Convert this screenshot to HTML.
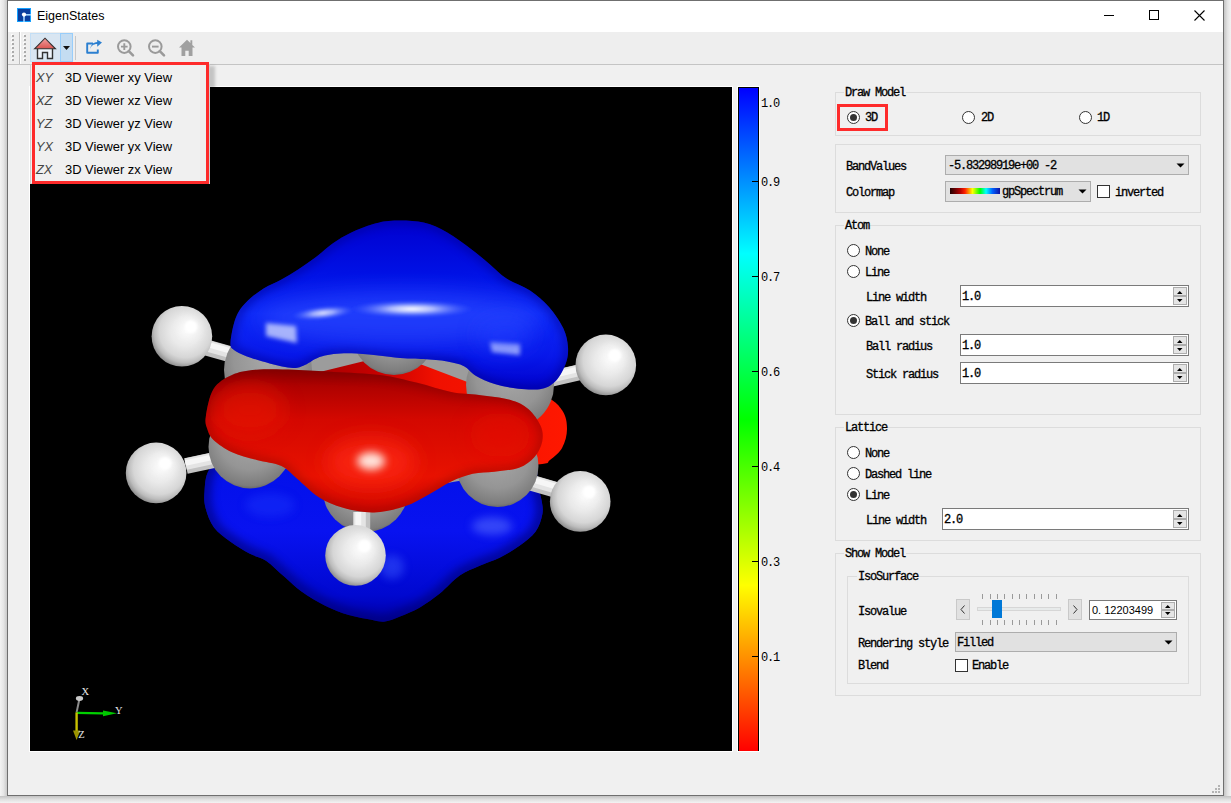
<!DOCTYPE html>
<html><head><meta charset="utf-8">
<style>
*{margin:0;padding:0;box-sizing:border-box}
html,body{width:1231px;height:803px;overflow:hidden;background:#f2f2f2;position:relative;font-family:"Liberation Sans",sans-serif}
.a{position:absolute}
#shadowL{left:0;top:0;width:7px;height:803px;background:linear-gradient(to right,#f3f3f3,#e6e6e6 50%,#c9c9c9)}
#shadowR{left:1224px;top:0;width:7px;height:803px;background:linear-gradient(to left,#f3f3f3,#e3e3e3 50%,#c4c4c4)}
#shadowB{left:0;top:796px;width:1231px;height:7px;background:linear-gradient(to top,#f3f3f3,#e0e0e0 50%,#c2c2c2)}
#win{left:7px;top:0;width:1217px;height:796px;border:1px solid #6f6f6f;background:#f0f0f0}
#title{left:8px;top:1px;width:1215px;height:31px;background:#fff}
#tb{left:8px;top:32px;width:1215px;height:32px;background:#eeeeee}
#tbline{left:8px;top:64px;width:1215px;height:1px;background:#c4c4c4}
.mono{font-family:"Liberation Mono",monospace;font-size:12px;letter-spacing:-1.2px;color:#000;white-space:pre;line-height:12px;-webkit-text-stroke:0.3px #000;margin-left:-1px}
.grp{border:1px solid #dcdcdc}
.gt{background:#f0f0f0;padding:0 1px}
.radio{width:13px;height:13px;border:1px solid #333;border-radius:50%;background:#fff}
.radio.on::after{content:"";position:absolute;left:2px;top:2px;width:7px;height:7px;border-radius:50%;background:#333}
.spin{background:#fff;border:1px solid #7a7a7a}
.sb{border:1px solid #adadad;background:#e5e5e5}
.combo{background:#e1e1e1;border:1px solid #adadad}
.chk{width:13px;height:13px;border:1px solid #333;background:#fff}
</style></head><body>
<div class="a" id="shadowL"></div><div class="a" id="shadowR"></div><div class="a" id="shadowB"></div>
<div class="a" id="win"></div>
<div class="a" id="title"></div>
<div class="a" id="tb"></div>
<div class="a" id="tbline"></div>

<!-- title bar -->
<svg class="a" style="left:17px;top:8px" width="14" height="14" viewBox="0 0 14 14">
<rect x="0" y="0" width="14" height="14" fill="#14a0ff"/>
<rect x="1" y="1" width="12" height="12" fill="#0a3f9e"/>
<rect x="7" y="6" width="7" height="1.6" fill="#9fd4ff"/>
<rect x="6.2" y="7" width="1.6" height="7" fill="#9fd4ff"/>
<circle cx="7" cy="6.6" r="2.1" fill="#fff"/>
</svg>
<div class="a" style="left:37px;top:8px;font-size:12.5px;line-height:16px;color:#000">EigenStates</div>
<div class="a" style="left:1104px;top:15px;width:10px;height:1px;background:#000"></div>
<div class="a" style="left:1149px;top:10px;width:10px;height:10px;border:1px solid #000"></div>
<svg class="a" style="left:1194px;top:10px" width="11" height="11" viewBox="0 0 11 11"><path d="M0.5 0.5L10.5 10.5M10.5 0.5L0.5 10.5" stroke="#000" stroke-width="1.1"/></svg>
<!-- toolbar -->
<div class="a" style="left:19px;top:32px;width:1px;height:32px;background:#bdbdbd"></div>
<div class="a" style="left:20px;top:32px;width:1px;height:32px;background:#fff"></div>
<div class="a" style="left:12px;top:35px;width:2px;height:2px;background:#ababab;box-shadow:-1px -1px 0 #fbfbfb"></div><div class="a" style="left:12px;top:39px;width:2px;height:2px;background:#ababab;box-shadow:-1px -1px 0 #fbfbfb"></div><div class="a" style="left:12px;top:43px;width:2px;height:2px;background:#ababab;box-shadow:-1px -1px 0 #fbfbfb"></div><div class="a" style="left:12px;top:47px;width:2px;height:2px;background:#ababab;box-shadow:-1px -1px 0 #fbfbfb"></div><div class="a" style="left:12px;top:51px;width:2px;height:2px;background:#ababab;box-shadow:-1px -1px 0 #fbfbfb"></div><div class="a" style="left:12px;top:55px;width:2px;height:2px;background:#ababab;box-shadow:-1px -1px 0 #fbfbfb"></div><div class="a" style="left:12px;top:59px;width:2px;height:2px;background:#ababab;box-shadow:-1px -1px 0 #fbfbfb"></div><div class="a" style="left:24px;top:35px;width:2px;height:2px;background:#ababab;box-shadow:-1px -1px 0 #fbfbfb"></div><div class="a" style="left:24px;top:39px;width:2px;height:2px;background:#ababab;box-shadow:-1px -1px 0 #fbfbfb"></div><div class="a" style="left:24px;top:43px;width:2px;height:2px;background:#ababab;box-shadow:-1px -1px 0 #fbfbfb"></div><div class="a" style="left:24px;top:47px;width:2px;height:2px;background:#ababab;box-shadow:-1px -1px 0 #fbfbfb"></div><div class="a" style="left:24px;top:51px;width:2px;height:2px;background:#ababab;box-shadow:-1px -1px 0 #fbfbfb"></div><div class="a" style="left:24px;top:55px;width:2px;height:2px;background:#ababab;box-shadow:-1px -1px 0 #fbfbfb"></div><div class="a" style="left:24px;top:59px;width:2px;height:2px;background:#ababab;box-shadow:-1px -1px 0 #fbfbfb"></div>

<div class="a" style="left:30px;top:33px;width:43px;height:29px;background:#d9e6f2;border:1px solid #c3def5"></div>
<div class="a" style="left:60px;top:33px;width:13px;height:29px;background:#c4dcf1;border:1px solid #98cdfa"></div>
<svg class="a" style="left:33px;top:36px" width="26" height="24" viewBox="0 0 26 24">
<defs><linearGradient id="roof" x1="0" y1="0" x2="0" y2="1"><stop offset="0" stop-color="#f2a0a0"/><stop offset="1" stop-color="#d9534f"/></linearGradient></defs>
<path d="M4.5 12.5V22.5H9.5V16.5H14.5V22.5H19.5V12.5" fill="#eef4fa" stroke="#333" stroke-width="1.4"/>
<path d="M1.5 12.8L12 2.2L22.5 12.8Z" fill="url(#roof)" stroke="#333" stroke-width="1.1" stroke-linejoin="miter"/>
</svg>
<svg class="a" style="left:62px;top:45px" width="9" height="6" viewBox="0 0 9 6"><path d="M1 1H8L4.5 5Z" fill="#111"/></svg>
<div class="a" style="left:75px;top:36px;width:1px;height:24px;background:#c8c8c8"></div>
<svg class="a" style="left:85px;top:39px" width="18" height="16" viewBox="0 0 18 16">
<path d="M8 4.5H2.2V13.8H12.8V10.5" fill="none" stroke="#2b7fd0" stroke-width="1.9" stroke-linejoin="round"/>
<path d="M5 11C5.5 7 8.5 5 12.2 5V7.8L17 3.6L12.2 0.8V3.1C8 3.2 5.5 6.5 5 11Z" fill="#2b7fd0"/>
</svg>
<svg class="a" style="left:114px;top:37px" width="22" height="22" viewBox="0 0 22 22">
<circle cx="10.3" cy="9.6" r="6.3" fill="none" stroke="#9a9a9a" stroke-width="2"/>
<path d="M14.8 14.2L19 18.4" stroke="#9a9a9a" stroke-width="2.6" stroke-linecap="round"/>
<path d="M7 9.6H13.6M10.3 6.3V12.9" stroke="#9a9a9a" stroke-width="1.9"/>
</svg>
<svg class="a" style="left:145px;top:37px" width="22" height="22" viewBox="0 0 22 22">
<circle cx="10.3" cy="9.6" r="6.3" fill="none" stroke="#9a9a9a" stroke-width="2"/>
<path d="M14.8 14.2L19 18.4" stroke="#9a9a9a" stroke-width="2.6" stroke-linecap="round"/>
<path d="M7 9.6H13.6" stroke="#9a9a9a" stroke-width="1.9"/>
</svg>
<svg class="a" style="left:178px;top:39px" width="18" height="18" viewBox="0 0 18 18">
<path d="M9 0.8L1 8.5H3.5V17H7.3V11.8H10.7V17H14.5V8.5H17L14.3 5.9V1.2H12.4V4.1Z" fill="#a0a0a0"/>
</svg>

<!-- view -->
<div class="a" style="left:29px;top:86px;width:704px;height:666px;background:#fff"></div>
<div class="a" id="view" style="left:30px;top:87px;width:702px;height:664px;background:#000"></div>
<!-- mol --><svg class="a" style="left:30px;top:87px" width="702" height="664" viewBox="30 87 702 664"><defs>
<radialGradient id="gH" cx="0.56" cy="0.42" r="0.6"><stop offset="0" stop-color="#f6f6f6"/><stop offset="0.4" stop-color="#eaeaea"/><stop offset="0.72" stop-color="#d6d6d6"/><stop offset="0.86" stop-color="#bcbcbc"/><stop offset="1" stop-color="#8c8c8c"/></radialGradient>
<radialGradient id="gC" cx="0.5" cy="0.38" r="0.65"><stop offset="0" stop-color="#a8a8a8"/><stop offset="0.6" stop-color="#959595"/><stop offset="0.9" stop-color="#7c7c7c"/><stop offset="1" stop-color="#5a5a5a"/></radialGradient>
<linearGradient id="stk" x1="0" y1="0" x2="0" y2="1"><stop offset="0" stop-color="#e8e8e8"/><stop offset="0.4" stop-color="#f4f4f4"/><stop offset="1" stop-color="#b8b8b8"/></linearGradient>
<linearGradient id="gB1" gradientUnits="userSpaceOnUse" x1="0" y1="220" x2="0" y2="390"><stop offset="0" stop-color="#0000d0"/><stop offset="0.3" stop-color="#0010e4"/><stop offset="0.55" stop-color="#0e2af8"/><stop offset="0.8" stop-color="#0818ea"/><stop offset="1" stop-color="#0000cc"/></linearGradient>
<linearGradient id="gB2" gradientUnits="userSpaceOnUse" x1="0" y1="440" x2="0" y2="622"><stop offset="0" stop-color="#0010e8"/><stop offset="0.5" stop-color="#0812f0"/><stop offset="0.85" stop-color="#0008d0"/><stop offset="1" stop-color="#0000a8"/></linearGradient>
<linearGradient id="gR1" gradientUnits="userSpaceOnUse" x1="0" y1="370" x2="0" y2="512"><stop offset="0" stop-color="#8c0000"/><stop offset="0.12" stop-color="#b00200"/><stop offset="0.35" stop-color="#d40800"/><stop offset="0.75" stop-color="#e81200"/><stop offset="1" stop-color="#d00800"/></linearGradient>
<linearGradient id="gR0" gradientUnits="userSpaceOnUse" x1="300" y1="0" x2="570" y2="0"><stop offset="0" stop-color="#a00000"/><stop offset="0.3" stop-color="#c80000"/><stop offset="0.5" stop-color="#f01000"/><stop offset="1" stop-color="#ff1800"/></linearGradient>
<radialGradient id="hl" cx="0.5" cy="0.5" r="0.5"><stop offset="0" stop-color="#ffffff" stop-opacity="1"/><stop offset="0.35" stop-color="#c8d2ff" stop-opacity="0.85"/><stop offset="1" stop-color="#4060ff" stop-opacity="0"/></radialGradient>
<clipPath id="cB1"><path d="M230.5 342.5C230.8 337.2 233.1 324.7 235.7 318.0C238.3 311.3 241.3 307.3 246.0 302.4C250.7 297.5 257.8 292.3 263.6 288.5C269.4 284.7 275.2 282.9 281.0 279.7C286.8 276.5 292.7 273.1 298.5 269.3C304.3 265.5 310.2 261.4 316.0 257.0C321.8 252.6 327.5 247.1 333.3 243.0C339.1 238.9 344.1 235.9 350.8 232.7C357.5 229.5 366.1 226.0 373.4 224.0C380.7 222.0 386.0 220.8 394.4 220.5C402.8 220.2 414.9 220.5 423.7 222.5C432.5 224.5 439.4 228.1 447.3 232.5C455.2 236.9 463.9 243.7 471.0 249.0C478.1 254.3 484.1 259.5 490.0 264.4C495.9 269.3 499.8 274.2 506.5 278.6C513.2 283.0 522.9 285.8 530.0 290.5C537.1 295.2 543.5 300.7 549.0 307.0C554.5 313.3 560.1 321.6 563.3 328.3C566.5 335.0 567.6 341.4 568.0 347.3C568.4 353.2 567.7 358.3 565.7 363.8C563.7 369.3 560.2 376.2 556.2 380.4C552.2 384.5 548.3 387.3 542.0 388.7C535.7 390.1 526.2 389.5 518.3 388.7C510.4 387.9 501.8 386.2 494.7 384.0C487.6 381.8 480.8 378.7 475.7 375.7C470.6 372.7 468.7 368.6 464.0 366.2C459.3 363.8 454.0 362.7 447.3 361.5C440.6 360.3 431.6 359.7 423.7 359.1C415.8 358.5 412.0 359.0 400.0 358.0C388.0 357.0 364.6 353.6 351.6 353.3C338.7 353.0 330.1 354.2 322.3 356.2C314.5 358.1 309.7 363.0 304.8 365.0C299.9 367.0 298.9 368.2 293.0 368.0C287.1 367.8 277.5 365.5 269.7 363.5C261.9 361.5 252.2 358.4 246.3 356.2C240.4 353.9 236.6 352.3 234.0 350.0C231.4 347.7 230.2 347.8 230.5 342.5Z"/></clipPath>
<clipPath id="cR1"><path d="M205.8 416.7C206.8 410.0 209.1 395.9 213.5 389.0C217.9 382.1 224.8 378.2 232.0 375.0C239.2 371.8 246.4 370.7 256.7 369.8C267.0 368.9 280.9 369.4 293.8 369.8C306.7 370.2 319.5 371.1 333.9 372.0C348.3 372.9 366.3 373.2 380.2 375.0C394.1 376.8 405.4 380.0 417.2 382.8C429.0 385.6 440.9 390.0 451.2 392.0C461.5 394.0 469.2 393.7 479.0 395.0C488.8 396.3 501.6 397.5 509.8 399.8C518.0 402.1 523.1 404.6 528.3 409.0C533.4 413.4 538.4 420.6 540.7 426.0C543.0 431.4 543.2 436.2 542.2 441.4C541.2 446.5 538.4 452.5 534.5 456.9C530.6 461.3 525.7 465.2 519.0 467.7C512.3 470.2 502.1 470.7 494.4 471.7C486.7 472.7 480.0 472.2 472.8 473.8C465.6 475.4 458.4 478.1 451.2 481.5C444.0 484.9 437.3 489.8 429.6 493.9C421.9 498.0 414.2 503.1 404.9 506.2C395.6 509.3 384.3 512.1 374.0 512.4C363.7 512.7 352.4 510.4 343.1 507.8C333.9 505.2 326.2 501.9 318.5 497.0C310.8 492.1 303.1 483.7 296.9 478.5C290.7 473.3 288.1 469.1 281.4 466.0C274.7 462.9 264.9 462.3 256.7 460.0C248.5 457.7 239.2 455.6 232.0 452.2C224.8 448.8 217.6 443.8 213.5 439.9C209.4 436.0 208.6 432.9 207.3 429.0C206.0 425.1 204.8 423.4 205.8 416.7Z"/></clipPath>
<clipPath id="cB2"><path d="M209.0 470.0C204.8 477.3 205.1 485.6 204.5 492.0C203.9 498.4 204.1 502.7 205.7 508.6C207.3 514.5 209.9 522.1 214.0 527.6C218.1 533.1 224.6 537.5 230.5 541.8C236.4 546.1 243.5 550.5 249.4 553.6C255.3 556.8 260.1 556.8 266.0 560.7C271.9 564.7 279.1 572.2 285.0 577.3C290.9 582.4 294.8 586.8 301.5 591.5C308.2 596.2 317.3 601.8 325.2 605.7C333.1 609.6 340.9 612.7 348.8 615.1C356.7 617.5 366.5 618.8 372.5 619.9C378.5 621.0 380.4 622.1 385.0 621.5C389.6 620.9 394.2 618.8 400.0 616.5C405.8 614.2 413.3 611.3 419.9 607.5C426.5 603.7 433.2 598.9 439.8 593.6C446.4 588.3 453.1 580.2 459.7 575.6C466.3 571.0 473.0 568.7 479.7 565.7C486.4 562.7 493.0 561.0 499.6 557.7C506.2 554.4 513.5 550.0 519.5 545.7C525.5 541.4 531.7 537.1 535.5 531.8C539.3 526.5 541.4 519.2 542.4 513.9C543.4 508.6 542.3 504.7 541.5 499.9C540.7 495.1 539.4 492.5 537.5 485.0C535.6 477.5 541.2 462.5 530.0 455.0C518.8 447.5 491.7 443.3 470.0 440.0C448.3 436.7 428.3 435.0 400.0 435.0C371.7 435.0 328.3 437.8 300.0 440.0C271.7 442.2 245.2 443.0 230.0 448.0C214.8 453.0 213.2 462.7 209.0 470.0Z"/></clipPath>
<filter id="bl1" x="-50%" y="-50%" width="200%" height="200%"><feGaussianBlur stdDeviation="1.3"/></filter>
<filter id="bl2" x="-50%" y="-50%" width="200%" height="200%"><feGaussianBlur stdDeviation="2"/></filter>
<filter id="bl4" x="-50%" y="-50%" width="200%" height="200%"><feGaussianBlur stdDeviation="4"/></filter>
<filter id="bl10" x="-50%" y="-50%" width="200%" height="200%"><feGaussianBlur stdDeviation="10"/></filter>
</defs>
<path d="M300.0 372.0C308.3 357.0 330.0 354.0 350.0 350.0C370.0 346.0 398.3 346.0 420.0 348.0C441.7 350.0 459.4 354.2 480.0 362.0C500.6 369.8 530.1 386.9 543.8 395.0C557.5 403.1 558.4 404.9 562.3 410.6C566.2 416.3 567.0 422.8 567.0 429.0C567.0 435.2 565.1 442.4 562.3 447.6C559.5 452.8 554.1 457.2 550.0 460.0C545.9 462.8 552.6 462.9 537.6 464.6C522.6 466.3 489.6 469.9 460.0 470.0C430.4 470.1 386.7 470.0 360.0 465.0C333.3 460.0 310.0 455.5 300.0 440.0C290.0 424.5 291.7 387.0 300.0 372.0Z" fill="url(#gR0)"/>
<path d="M209.0 470.0C204.8 477.3 205.1 485.6 204.5 492.0C203.9 498.4 204.1 502.7 205.7 508.6C207.3 514.5 209.9 522.1 214.0 527.6C218.1 533.1 224.6 537.5 230.5 541.8C236.4 546.1 243.5 550.5 249.4 553.6C255.3 556.8 260.1 556.8 266.0 560.7C271.9 564.7 279.1 572.2 285.0 577.3C290.9 582.4 294.8 586.8 301.5 591.5C308.2 596.2 317.3 601.8 325.2 605.7C333.1 609.6 340.9 612.7 348.8 615.1C356.7 617.5 366.5 618.8 372.5 619.9C378.5 621.0 380.4 622.1 385.0 621.5C389.6 620.9 394.2 618.8 400.0 616.5C405.8 614.2 413.3 611.3 419.9 607.5C426.5 603.7 433.2 598.9 439.8 593.6C446.4 588.3 453.1 580.2 459.7 575.6C466.3 571.0 473.0 568.7 479.7 565.7C486.4 562.7 493.0 561.0 499.6 557.7C506.2 554.4 513.5 550.0 519.5 545.7C525.5 541.4 531.7 537.1 535.5 531.8C539.3 526.5 541.4 519.2 542.4 513.9C543.4 508.6 542.3 504.7 541.5 499.9C540.7 495.1 539.4 492.5 537.5 485.0C535.6 477.5 541.2 462.5 530.0 455.0C518.8 447.5 491.7 443.3 470.0 440.0C448.3 436.7 428.3 435.0 400.0 435.0C371.7 435.0 328.3 437.8 300.0 440.0C271.7 442.2 245.2 443.0 230.0 448.0C214.8 453.0 213.2 462.7 209.0 470.0Z" fill="url(#gB2)"/>
<g clip-path="url(#cB2)"><path d="M209.0 470.0C204.8 477.3 205.1 485.6 204.5 492.0C203.9 498.4 204.1 502.7 205.7 508.6C207.3 514.5 209.9 522.1 214.0 527.6C218.1 533.1 224.6 537.5 230.5 541.8C236.4 546.1 243.5 550.5 249.4 553.6C255.3 556.8 260.1 556.8 266.0 560.7C271.9 564.7 279.1 572.2 285.0 577.3C290.9 582.4 294.8 586.8 301.5 591.5C308.2 596.2 317.3 601.8 325.2 605.7C333.1 609.6 340.9 612.7 348.8 615.1C356.7 617.5 366.5 618.8 372.5 619.9C378.5 621.0 380.4 622.1 385.0 621.5C389.6 620.9 394.2 618.8 400.0 616.5C405.8 614.2 413.3 611.3 419.9 607.5C426.5 603.7 433.2 598.9 439.8 593.6C446.4 588.3 453.1 580.2 459.7 575.6C466.3 571.0 473.0 568.7 479.7 565.7C486.4 562.7 493.0 561.0 499.6 557.7C506.2 554.4 513.5 550.0 519.5 545.7C525.5 541.4 531.7 537.1 535.5 531.8C539.3 526.5 541.4 519.2 542.4 513.9C543.4 508.6 542.3 504.7 541.5 499.9C540.7 495.1 539.4 492.5 537.5 485.0C535.6 477.5 541.2 462.5 530.0 455.0C518.8 447.5 491.7 443.3 470.0 440.0C448.3 436.7 428.3 435.0 400.0 435.0C371.7 435.0 328.3 437.8 300.0 440.0C271.7 442.2 245.2 443.0 230.0 448.0C214.8 453.0 213.2 462.7 209.0 470.0Z" fill="none" stroke="#000070" stroke-width="14" opacity="0.6" filter="url(#bl4)"/>
<ellipse cx="492" cy="526" rx="20" ry="9" fill="#6078ff" opacity="0.5" filter="url(#bl4)"/><ellipse cx="392" cy="567" rx="12" ry="12" fill="#4060ff" opacity="0.45" filter="url(#bl4)"/><ellipse cx="270" cy="505" rx="25" ry="12" fill="#2040ff" opacity="0.35" filter="url(#bl4)"/></g>
<line x1="240.0" y1="357.0" x2="201.0" y2="346.0" stroke="#c2c2c2" stroke-width="16"/><line x1="240.5" y1="355.2" x2="201.5" y2="344.2" stroke="#e4e4e4" stroke-width="11.5"/><line x1="240.9" y1="353.9" x2="201.9" y2="342.9" stroke="#f6f6f6" stroke-width="5.6"/>
<line x1="548.0" y1="379.5" x2="585.0" y2="371.0" stroke="#c2c2c2" stroke-width="16"/><line x1="547.6" y1="377.6" x2="584.6" y2="369.1" stroke="#e4e4e4" stroke-width="11.5"/><line x1="547.3" y1="376.4" x2="584.3" y2="367.9" stroke="#f6f6f6" stroke-width="5.6"/>
<line x1="226.0" y1="457.5" x2="186.0" y2="466.0" stroke="#c2c2c2" stroke-width="16"/><line x1="225.6" y1="455.6" x2="185.6" y2="464.1" stroke="#e4e4e4" stroke-width="11.5"/><line x1="225.3" y1="454.4" x2="185.3" y2="462.9" stroke="#f6f6f6" stroke-width="5.6"/>
<line x1="515.0" y1="478.0" x2="555.0" y2="489.6" stroke="#c2c2c2" stroke-width="16"/><line x1="515.5" y1="476.2" x2="555.5" y2="487.8" stroke="#e4e4e4" stroke-width="11.5"/><line x1="515.9" y1="474.9" x2="555.9" y2="486.5" stroke="#f6f6f6" stroke-width="5.6"/>
<line x1="497.5" y1="466.0" x2="365.5" y2="489.0" stroke="#9c9c9c" stroke-width="16"/>
<line x1="365.5" y1="489.0" x2="250.0" y2="447.0" stroke="#9c9c9c" stroke-width="16"/>
<circle cx="497.5" cy="466.0" r="41.0" fill="url(#gC)"/>
<circle cx="365.5" cy="489.0" r="43.0" fill="url(#gC)"/>
<circle cx="250.0" cy="447.0" r="41.5" fill="url(#gC)"/>
<line x1="268.0" y1="376.0" x2="394.0" y2="345.0" stroke="#9c9c9c" stroke-width="17"/>
<line x1="394.0" y1="345.0" x2="510.0" y2="389.0" stroke="#9c9c9c" stroke-width="17"/>
<line x1="510.0" y1="385.0" x2="497.5" y2="466.0" stroke="#9c9c9c" stroke-width="16"/>
<line x1="268.0" y1="370.0" x2="250.0" y2="447.0" stroke="#9c9c9c" stroke-width="16"/>
<circle cx="394.0" cy="333.0" r="42.0" fill="url(#gC)"/>
<circle cx="510.0" cy="385.0" r="44.0" fill="url(#gC)"/>
<circle cx="268.0" cy="370.0" r="44.0" fill="url(#gC)"/>
<circle cx="181.9" cy="336.3" r="30.3" fill="url(#gH)"/><circle cx="189.9" cy="327.3" r="11" fill="#ffffff" opacity="0.5" filter="url(#bl4)"/><circle cx="190.9" cy="326.8" r="6.5" fill="#ffffff" opacity="1" filter="url(#bl1)"/>
<circle cx="605.8" cy="364.9" r="30.3" fill="url(#gH)"/><circle cx="613.8" cy="355.9" r="11" fill="#ffffff" opacity="0.5" filter="url(#bl4)"/><circle cx="614.8" cy="355.4" r="6.5" fill="#ffffff" opacity="1" filter="url(#bl1)"/>
<circle cx="156.1" cy="472.9" r="30.3" fill="url(#gH)"/><circle cx="164.1" cy="463.9" r="11" fill="#ffffff" opacity="0.5" filter="url(#bl4)"/><circle cx="165.1" cy="463.4" r="6.5" fill="#ffffff" opacity="1" filter="url(#bl1)"/>
<circle cx="580.2" cy="501.4" r="30.3" fill="url(#gH)"/><circle cx="588.2" cy="492.4" r="11" fill="#ffffff" opacity="0.5" filter="url(#bl4)"/><circle cx="589.2" cy="491.9" r="6.5" fill="#ffffff" opacity="1" filter="url(#bl1)"/>
<path d="M230.5 342.5C230.8 337.2 233.1 324.7 235.7 318.0C238.3 311.3 241.3 307.3 246.0 302.4C250.7 297.5 257.8 292.3 263.6 288.5C269.4 284.7 275.2 282.9 281.0 279.7C286.8 276.5 292.7 273.1 298.5 269.3C304.3 265.5 310.2 261.4 316.0 257.0C321.8 252.6 327.5 247.1 333.3 243.0C339.1 238.9 344.1 235.9 350.8 232.7C357.5 229.5 366.1 226.0 373.4 224.0C380.7 222.0 386.0 220.8 394.4 220.5C402.8 220.2 414.9 220.5 423.7 222.5C432.5 224.5 439.4 228.1 447.3 232.5C455.2 236.9 463.9 243.7 471.0 249.0C478.1 254.3 484.1 259.5 490.0 264.4C495.9 269.3 499.8 274.2 506.5 278.6C513.2 283.0 522.9 285.8 530.0 290.5C537.1 295.2 543.5 300.7 549.0 307.0C554.5 313.3 560.1 321.6 563.3 328.3C566.5 335.0 567.6 341.4 568.0 347.3C568.4 353.2 567.7 358.3 565.7 363.8C563.7 369.3 560.2 376.2 556.2 380.4C552.2 384.5 548.3 387.3 542.0 388.7C535.7 390.1 526.2 389.5 518.3 388.7C510.4 387.9 501.8 386.2 494.7 384.0C487.6 381.8 480.8 378.7 475.7 375.7C470.6 372.7 468.7 368.6 464.0 366.2C459.3 363.8 454.0 362.7 447.3 361.5C440.6 360.3 431.6 359.7 423.7 359.1C415.8 358.5 412.0 359.0 400.0 358.0C388.0 357.0 364.6 353.6 351.6 353.3C338.7 353.0 330.1 354.2 322.3 356.2C314.5 358.1 309.7 363.0 304.8 365.0C299.9 367.0 298.9 368.2 293.0 368.0C287.1 367.8 277.5 365.5 269.7 363.5C261.9 361.5 252.2 358.4 246.3 356.2C240.4 353.9 236.6 352.3 234.0 350.0C231.4 347.7 230.2 347.8 230.5 342.5Z" fill="url(#gB1)"/>
<g clip-path="url(#cB1)">
<path d="M230.5 342.5C230.8 337.2 233.1 324.7 235.7 318.0C238.3 311.3 241.3 307.3 246.0 302.4C250.7 297.5 257.8 292.3 263.6 288.5C269.4 284.7 275.2 282.9 281.0 279.7C286.8 276.5 292.7 273.1 298.5 269.3C304.3 265.5 310.2 261.4 316.0 257.0C321.8 252.6 327.5 247.1 333.3 243.0C339.1 238.9 344.1 235.9 350.8 232.7C357.5 229.5 366.1 226.0 373.4 224.0C380.7 222.0 386.0 220.8 394.4 220.5C402.8 220.2 414.9 220.5 423.7 222.5C432.5 224.5 439.4 228.1 447.3 232.5C455.2 236.9 463.9 243.7 471.0 249.0C478.1 254.3 484.1 259.5 490.0 264.4C495.9 269.3 499.8 274.2 506.5 278.6C513.2 283.0 522.9 285.8 530.0 290.5C537.1 295.2 543.5 300.7 549.0 307.0C554.5 313.3 560.1 321.6 563.3 328.3C566.5 335.0 567.6 341.4 568.0 347.3C568.4 353.2 567.7 358.3 565.7 363.8C563.7 369.3 560.2 376.2 556.2 380.4C552.2 384.5 548.3 387.3 542.0 388.7C535.7 390.1 526.2 389.5 518.3 388.7C510.4 387.9 501.8 386.2 494.7 384.0C487.6 381.8 480.8 378.7 475.7 375.7C470.6 372.7 468.7 368.6 464.0 366.2C459.3 363.8 454.0 362.7 447.3 361.5C440.6 360.3 431.6 359.7 423.7 359.1C415.8 358.5 412.0 359.0 400.0 358.0C388.0 357.0 364.6 353.6 351.6 353.3C338.7 353.0 330.1 354.2 322.3 356.2C314.5 358.1 309.7 363.0 304.8 365.0C299.9 367.0 298.9 368.2 293.0 368.0C287.1 367.8 277.5 365.5 269.7 363.5C261.9 361.5 252.2 358.4 246.3 356.2C240.4 353.9 236.6 352.3 234.0 350.0C231.4 347.7 230.2 347.8 230.5 342.5Z" fill="none" stroke="#00008c" stroke-width="9" opacity="0.5" filter="url(#bl4)"/>
<ellipse cx="400" cy="318" rx="140" ry="26" fill="#3050ff" opacity="0.5" filter="url(#bl10)"/>
<ellipse cx="412" cy="309" rx="62" ry="9" fill="url(#hl)" filter="url(#bl1)"/>
<ellipse cx="323" cy="313" rx="32" ry="7" fill="url(#hl)" opacity="0.85" filter="url(#bl1)" transform="rotate(-6 323 313)"/>
<path d="M266 323L296 326L297 343L266 336Z" fill="#d8e0ff" opacity="0.75" filter="url(#bl2)"/>
<path d="M490 342L520 344L520 355L492 352Z" fill="#d8e0ff" opacity="0.8" filter="url(#bl2)"/>
<ellipse cx="505" cy="335" rx="30" ry="18" fill="#2040ff" opacity="0.45" filter="url(#bl10)"/>
</g>
<line x1="361.7" y1="512.0" x2="361.7" y2="532.0" stroke="#c2c2c2" stroke-width="17"/><line x1="359.7" y1="512.0" x2="359.7" y2="532.0" stroke="#e4e4e4" stroke-width="12.2"/><line x1="358.3" y1="512.0" x2="358.3" y2="532.0" stroke="#f6f6f6" stroke-width="5.9"/>
<path d="M205.8 416.7C206.8 410.0 209.1 395.9 213.5 389.0C217.9 382.1 224.8 378.2 232.0 375.0C239.2 371.8 246.4 370.7 256.7 369.8C267.0 368.9 280.9 369.4 293.8 369.8C306.7 370.2 319.5 371.1 333.9 372.0C348.3 372.9 366.3 373.2 380.2 375.0C394.1 376.8 405.4 380.0 417.2 382.8C429.0 385.6 440.9 390.0 451.2 392.0C461.5 394.0 469.2 393.7 479.0 395.0C488.8 396.3 501.6 397.5 509.8 399.8C518.0 402.1 523.1 404.6 528.3 409.0C533.4 413.4 538.4 420.6 540.7 426.0C543.0 431.4 543.2 436.2 542.2 441.4C541.2 446.5 538.4 452.5 534.5 456.9C530.6 461.3 525.7 465.2 519.0 467.7C512.3 470.2 502.1 470.7 494.4 471.7C486.7 472.7 480.0 472.2 472.8 473.8C465.6 475.4 458.4 478.1 451.2 481.5C444.0 484.9 437.3 489.8 429.6 493.9C421.9 498.0 414.2 503.1 404.9 506.2C395.6 509.3 384.3 512.1 374.0 512.4C363.7 512.7 352.4 510.4 343.1 507.8C333.9 505.2 326.2 501.9 318.5 497.0C310.8 492.1 303.1 483.7 296.9 478.5C290.7 473.3 288.1 469.1 281.4 466.0C274.7 462.9 264.9 462.3 256.7 460.0C248.5 457.7 239.2 455.6 232.0 452.2C224.8 448.8 217.6 443.8 213.5 439.9C209.4 436.0 208.6 432.9 207.3 429.0C206.0 425.1 204.8 423.4 205.8 416.7Z" fill="url(#gR1)"/>
<g clip-path="url(#cR1)">
<path d="M205.8 416.7C206.8 410.0 209.1 395.9 213.5 389.0C217.9 382.1 224.8 378.2 232.0 375.0C239.2 371.8 246.4 370.7 256.7 369.8C267.0 368.9 280.9 369.4 293.8 369.8C306.7 370.2 319.5 371.1 333.9 372.0C348.3 372.9 366.3 373.2 380.2 375.0C394.1 376.8 405.4 380.0 417.2 382.8C429.0 385.6 440.9 390.0 451.2 392.0C461.5 394.0 469.2 393.7 479.0 395.0C488.8 396.3 501.6 397.5 509.8 399.8C518.0 402.1 523.1 404.6 528.3 409.0C533.4 413.4 538.4 420.6 540.7 426.0C543.0 431.4 543.2 436.2 542.2 441.4C541.2 446.5 538.4 452.5 534.5 456.9C530.6 461.3 525.7 465.2 519.0 467.7C512.3 470.2 502.1 470.7 494.4 471.7C486.7 472.7 480.0 472.2 472.8 473.8C465.6 475.4 458.4 478.1 451.2 481.5C444.0 484.9 437.3 489.8 429.6 493.9C421.9 498.0 414.2 503.1 404.9 506.2C395.6 509.3 384.3 512.1 374.0 512.4C363.7 512.7 352.4 510.4 343.1 507.8C333.9 505.2 326.2 501.9 318.5 497.0C310.8 492.1 303.1 483.7 296.9 478.5C290.7 473.3 288.1 469.1 281.4 466.0C274.7 462.9 264.9 462.3 256.7 460.0C248.5 457.7 239.2 455.6 232.0 452.2C224.8 448.8 217.6 443.8 213.5 439.9C209.4 436.0 208.6 432.9 207.3 429.0C206.0 425.1 204.8 423.4 205.8 416.7Z" fill="none" stroke="#700000" stroke-width="8" opacity="0.35" filter="url(#bl4)"/>
<ellipse cx="250" cy="410" rx="35" ry="25" fill="#e81400" opacity="0.6" filter="url(#bl10)"/>
<ellipse cx="371" cy="462" rx="45" ry="25" fill="#ff2a14" opacity="0.7" filter="url(#bl10)"/>
<ellipse cx="371" cy="461" rx="14" ry="9" fill="#fff0e8" opacity="0.95" filter="url(#bl4)"/>
<ellipse cx="500" cy="435" rx="30" ry="22" fill="#e81000" opacity="0.5" filter="url(#bl10)"/>
</g>
<circle cx="355.5" cy="555.4" r="30.3" fill="url(#gH)"/><circle cx="363.5" cy="546.4" r="11" fill="#ffffff" opacity="0.5" filter="url(#bl4)"/><circle cx="364.5" cy="545.9" r="6.5" fill="#ffffff" opacity="1" filter="url(#bl1)"/>
<g>
<line x1="76.6" y1="712.4" x2="79.4" y2="699" stroke="#8c8c8c" stroke-width="2"/>
<ellipse cx="79.5" cy="698.5" rx="3.6" ry="2.4" fill="#c8c8c8"/>
<line x1="76.6" y1="712.8" x2="103" y2="713.4" stroke="#00d000" stroke-width="2.2"/>
<path d="M103 710.6L117 713.3L103 716.3Z" fill="#00c800"/>
<line x1="76.6" y1="712.4" x2="76.6" y2="731" stroke="#c8c000" stroke-width="2.4"/>
<path d="M73 730.5H80.2L76.6 740Z" fill="#9a9400"/>
<text x="81.5" y="694.6" font-family="Liberation Serif" font-size="10.5" fill="#e8e8e8">X</text>
<text x="115" y="714" font-family="Liberation Serif" font-size="10.5" fill="#e8e8e8">Y</text>
<text x="78.2" y="738" font-family="Liberation Serif" font-size="10.5" fill="#e8e8e8">Z</text>
</g></svg><!-- /mol -->
<!-- colorbar -->
<div class="a" style="left:737px;top:86px;width:23px;height:666px;background:#fff"></div>
<div class="a" style="left:738px;top:87px;width:21px;height:664px;background:#000"></div>
<div class="a" style="left:739px;top:88px;width:19px;height:663px;background:linear-gradient(to bottom,#0000ff 0%,#00ffff 25%,#00ff00 50%,#ffff00 75%,#ff0000 100%)"></div>


<!-- cbl -->
<div class="a mono" style="-webkit-text-stroke:0;margin-left:0;left:761px;top:98px">1.0</div>
<div class="a" style="left:752px;top:181px;width:6px;height:1px;background:#000"></div>
<div class="a mono" style="-webkit-text-stroke:0;margin-left:0;left:761px;top:177px">0.9</div>
<div class="a" style="left:752px;top:276px;width:6px;height:1px;background:#000"></div>
<div class="a mono" style="-webkit-text-stroke:0;margin-left:0;left:761px;top:272px">0.7</div>
<div class="a" style="left:752px;top:371px;width:6px;height:1px;background:#000"></div>
<div class="a mono" style="-webkit-text-stroke:0;margin-left:0;left:761px;top:367px">0.6</div>
<div class="a" style="left:752px;top:466px;width:6px;height:1px;background:#000"></div>
<div class="a mono" style="-webkit-text-stroke:0;margin-left:0;left:761px;top:462px">0.4</div>
<div class="a" style="left:752px;top:561px;width:6px;height:1px;background:#000"></div>
<div class="a mono" style="-webkit-text-stroke:0;margin-left:0;left:761px;top:557px">0.3</div>
<div class="a" style="left:752px;top:656px;width:6px;height:1px;background:#000"></div>
<div class="a mono" style="-webkit-text-stroke:0;margin-left:0;left:761px;top:652px">0.1</div>
<div class="a" style="left:1218px;top:785px;width:2px;height:2px;background:#b4b4b4"></div>
<div class="a" style="left:1215px;top:788px;width:2px;height:2px;background:#b4b4b4"></div>
<div class="a" style="left:1218px;top:788px;width:2px;height:2px;background:#b4b4b4"></div>
<div class="a" style="left:1212px;top:791px;width:2px;height:2px;background:#b4b4b4"></div>
<div class="a" style="left:1215px;top:791px;width:2px;height:2px;background:#b4b4b4"></div>
<div class="a" style="left:1218px;top:791px;width:2px;height:2px;background:#b4b4b4"></div>
<!-- panel -->
<div class="a grp" style="left:835px;top:92px;width:366px;height:44px"></div>
<div class="a mono gt" style="left:845px;top:87px">Draw Model</div>
<div class="a radio on" style="left:847px;top:111px"></div>
<div class="a mono" style="left:866.0px;top:112.0px;">3D</div>
<div class="a radio" style="left:962px;top:111px"></div>
<div class="a mono" style="left:982.0px;top:112.0px;">2D</div>
<div class="a radio" style="left:1079px;top:111px"></div>
<div class="a mono" style="left:1098.0px;top:112.0px;">1D</div>
<div class="a" style="left:837px;top:104px;width:51px;height:27px;border:3px solid #fe2b2b"></div>
<div class="a grp" style="left:835px;top:144px;width:366px;height:69px"></div>
<div class="a mono" style="left:847.0px;top:160.5px;">BandValues</div>
<div class="a combo" style="left:945px;top:155px;width:244px;height:20px"></div>
<svg class="a" style="left:1176px;top:163px" width="9" height="5" viewBox="0 0 9 5"><path d="M0.5 0.5H8.5L4.5 4.5Z" fill="#000"/></svg>
<div class="a mono" style="left:949px;top:159.5px">-5.83298919e+00 -2</div>
<div class="a mono" style="left:847.0px;top:186.5px;">Colormap</div>
<div class="a combo" style="left:945px;top:181px;width:146px;height:21px"></div>
<svg class="a" style="left:1078px;top:189px" width="9" height="5" viewBox="0 0 9 5"><path d="M0.5 0.5H8.5L4.5 4.5Z" fill="#000"/></svg>
<div class="a" style="left:950px;top:188px;width:50px;height:6px;background:linear-gradient(to right,#200000,#b00000 20%,#ff2000 30%,#ffff00 45%,#00ff00 60%,#00ffff 72%,#0060ff 85%,#1010a0)"></div>
<div class="a mono" style="left:1003px;top:186px">gpSpectrum</div>
<div class="a chk" style="left:1097px;top:185px"></div>
<div class="a mono" style="left:1116.0px;top:186.5px;">inverted</div>
<div class="a grp" style="left:835px;top:225px;width:366px;height:190px"></div>
<div class="a mono gt" style="left:845px;top:220px">Atom</div>
<div class="a radio" style="left:847px;top:244px"></div>
<div class="a mono" style="left:866.0px;top:245.5px;">None</div>
<div class="a radio" style="left:847px;top:265px"></div>
<div class="a mono" style="left:866.0px;top:266.5px;">Line</div>
<div class="a mono" style="left:867.0px;top:291.5px;">Line width</div>
<div class="a spin" style="left:960px;top:285px;width:229px;height:22px"></div>
<div class="a sb" style="left:1173px;top:287px;width:14px;height:9px"></div>
<div class="a sb" style="left:1173px;top:296px;width:14px;height:9px"></div>
<svg class="a" style="left:1173px;top:287px" width="14" height="18" viewBox="0 0 14 18"><path d="M4 7H9.5L6.75 4Z M4 12H9.5L6.75 15Z" fill="#000"/></svg>
<div class="a mono" style="left:963px;top:290.5px">1.0</div>
<div class="a radio on" style="left:847px;top:314px"></div>
<div class="a mono" style="left:866.0px;top:315.5px;">Ball and stick</div>
<div class="a mono" style="left:867.0px;top:340.5px;">Ball radius</div>
<div class="a spin" style="left:960px;top:334px;width:229px;height:22px"></div>
<div class="a sb" style="left:1173px;top:336px;width:14px;height:9px"></div>
<div class="a sb" style="left:1173px;top:345px;width:14px;height:9px"></div>
<svg class="a" style="left:1173px;top:336px" width="14" height="18" viewBox="0 0 14 18"><path d="M4 7H9.5L6.75 4Z M4 12H9.5L6.75 15Z" fill="#000"/></svg>
<div class="a mono" style="left:963px;top:339.5px">1.0</div>
<div class="a mono" style="left:867.0px;top:368.5px;">Stick radius</div>
<div class="a spin" style="left:960px;top:362px;width:229px;height:22px"></div>
<div class="a sb" style="left:1173px;top:364px;width:14px;height:9px"></div>
<div class="a sb" style="left:1173px;top:373px;width:14px;height:9px"></div>
<svg class="a" style="left:1173px;top:364px" width="14" height="18" viewBox="0 0 14 18"><path d="M4 7H9.5L6.75 4Z M4 12H9.5L6.75 15Z" fill="#000"/></svg>
<div class="a mono" style="left:963px;top:367.5px">1.0</div>
<div class="a grp" style="left:835px;top:427px;width:366px;height:114px"></div>
<div class="a mono gt" style="left:845px;top:422px">Lattice</div>
<div class="a radio" style="left:847px;top:446px"></div>
<div class="a mono" style="left:866.0px;top:447.5px;">None</div>
<div class="a radio" style="left:847px;top:467px"></div>
<div class="a mono" style="left:866.0px;top:468.5px;">Dashed line</div>
<div class="a radio on" style="left:847px;top:488px"></div>
<div class="a mono" style="left:866.0px;top:489.5px;">Line</div>
<div class="a mono" style="left:867.0px;top:514.5px;">Line width</div>
<div class="a spin" style="left:942px;top:508px;width:247px;height:22px"></div>
<div class="a sb" style="left:1173px;top:510px;width:14px;height:9px"></div>
<div class="a sb" style="left:1173px;top:519px;width:14px;height:9px"></div>
<svg class="a" style="left:1173px;top:510px" width="14" height="18" viewBox="0 0 14 18"><path d="M4 7H9.5L6.75 4Z M4 12H9.5L6.75 15Z" fill="#000"/></svg>
<div class="a mono" style="left:945px;top:513.5px">2.0</div>
<div class="a grp" style="left:835px;top:553px;width:366px;height:143px"></div>
<div class="a mono gt" style="left:845px;top:548px">Show Model</div>
<div class="a grp" style="left:847px;top:576px;width:342px;height:108px"></div>
<div class="a mono gt" style="left:858px;top:571px">IsoSurface</div>
<div class="a mono" style="left:859.0px;top:605.5px;">Isovalue</div>
<div class="a" style="left:956px;top:599px;width:14px;height:21px;background:#e1e1e1;border:1px solid #c9c9c9"></div>
<svg class="a" style="left:956px;top:599px" width="14" height="21" viewBox="0 0 14 21"><path d="M8.5 6.5L5 10.5L8.5 14.5" fill="none" stroke="#333" stroke-width="1"/></svg>
<div class="a" style="left:1068px;top:599px;width:14px;height:21px;background:#e1e1e1;border:1px solid #c9c9c9"></div>
<svg class="a" style="left:1068px;top:599px" width="14" height="21" viewBox="0 0 14 21"><path d="M5.5 6.5L9 10.5L5.5 14.5" fill="none" stroke="#333" stroke-width="1"/></svg>
<div class="a" style="left:977px;top:607px;width:84px;height:4px;background:#e7eaea;border:1px solid #d6d6d6"></div>
<div class="a" style="left:982px;top:594px;width:1px;height:5px;background:#9a9a9a"></div><div class="a" style="left:982px;top:620px;width:1px;height:5px;background:#9a9a9a"></div><div class="a" style="left:990px;top:594px;width:1px;height:5px;background:#9a9a9a"></div><div class="a" style="left:990px;top:620px;width:1px;height:5px;background:#9a9a9a"></div><div class="a" style="left:997px;top:594px;width:1px;height:5px;background:#9a9a9a"></div><div class="a" style="left:997px;top:620px;width:1px;height:5px;background:#9a9a9a"></div><div class="a" style="left:1004px;top:594px;width:1px;height:5px;background:#9a9a9a"></div><div class="a" style="left:1004px;top:620px;width:1px;height:5px;background:#9a9a9a"></div><div class="a" style="left:1012px;top:594px;width:1px;height:5px;background:#9a9a9a"></div><div class="a" style="left:1012px;top:620px;width:1px;height:5px;background:#9a9a9a"></div><div class="a" style="left:1019px;top:594px;width:1px;height:5px;background:#9a9a9a"></div><div class="a" style="left:1019px;top:620px;width:1px;height:5px;background:#9a9a9a"></div><div class="a" style="left:1026px;top:594px;width:1px;height:5px;background:#9a9a9a"></div><div class="a" style="left:1026px;top:620px;width:1px;height:5px;background:#9a9a9a"></div><div class="a" style="left:1034px;top:594px;width:1px;height:5px;background:#9a9a9a"></div><div class="a" style="left:1034px;top:620px;width:1px;height:5px;background:#9a9a9a"></div><div class="a" style="left:1041px;top:594px;width:1px;height:5px;background:#9a9a9a"></div><div class="a" style="left:1041px;top:620px;width:1px;height:5px;background:#9a9a9a"></div><div class="a" style="left:1048px;top:594px;width:1px;height:5px;background:#9a9a9a"></div><div class="a" style="left:1048px;top:620px;width:1px;height:5px;background:#9a9a9a"></div><div class="a" style="left:1056px;top:594px;width:1px;height:5px;background:#9a9a9a"></div><div class="a" style="left:1056px;top:620px;width:1px;height:5px;background:#9a9a9a"></div>
<div class="a" style="left:992px;top:600px;width:10px;height:18px;background:#0078d7"></div>
<div class="a spin" style="left:1089px;top:600px;width:88px;height:20px"></div>
<div class="a sb" style="left:1161px;top:602px;width:14px;height:8px"></div><div class="a sb" style="left:1161px;top:610px;width:14px;height:8px"></div>
<svg class="a" style="left:1161px;top:602px" width="14" height="16" viewBox="0 0 14 16"><path d="M4 6H9.5L6.75 3Z M4 10H9.5L6.75 13Z" fill="#000"/></svg>
<div class="a" style="left:1092px;top:603px;font-size:11px;line-height:14px;color:#000">0. 12203499</div>
<div class="a mono" style="left:859.0px;top:637.5px;">Rendering style</div>
<div class="a combo" style="left:955px;top:632px;width:222px;height:20px"></div>
<svg class="a" style="left:1164px;top:640px" width="9" height="5" viewBox="0 0 9 5"><path d="M0.5 0.5H8.5L4.5 4.5Z" fill="#000"/></svg>
<div class="a mono" style="left:958px;top:636.5px">Filled</div>
<div class="a mono" style="left:859.0px;top:660.0px;">Blend</div>
<div class="a chk" style="left:955px;top:659px"></div>
<div class="a mono" style="left:973.0px;top:660.0px;">Enable</div>
<!-- menu -->
<div class="a" style="width:182px;height:123px;background:rgba(0,0,0,0.18);filter:blur(1.5px);left:33px;top:66px"></div>
<div class="a" style="left:30px;top:64px;width:180px;height:120px;background:#f0f0f0;border:1px solid #cfcfcf"></div>
<div class="a" style="left:32px;top:62px;width:177px;height:122px;border:3px solid #fe2b2b"></div>
<div class="a" style="left:36px;top:69.7px;font-size:12.7px;line-height:16px;font-style:italic;color:#454545">XY</div>
<div class="a" style="left:65px;top:69.7px;font-size:12.9px;line-height:16px;color:#000">3D Viewer xy View</div>
<div class="a" style="left:36px;top:92.7px;font-size:12.7px;line-height:16px;font-style:italic;color:#454545">XZ</div>
<div class="a" style="left:65px;top:92.7px;font-size:12.9px;line-height:16px;color:#000">3D Viewer xz View</div>
<div class="a" style="left:36px;top:115.7px;font-size:12.7px;line-height:16px;font-style:italic;color:#454545">YZ</div>
<div class="a" style="left:65px;top:115.7px;font-size:12.9px;line-height:16px;color:#000">3D Viewer yz View</div>
<div class="a" style="left:36px;top:138.7px;font-size:12.7px;line-height:16px;font-style:italic;color:#454545">YX</div>
<div class="a" style="left:65px;top:138.7px;font-size:12.9px;line-height:16px;color:#000">3D Viewer yx View</div>
<div class="a" style="left:36px;top:161.7px;font-size:12.7px;line-height:16px;font-style:italic;color:#454545">ZX</div>
<div class="a" style="left:65px;top:161.7px;font-size:12.9px;line-height:16px;color:#000">3D Viewer zx View</div>
</body></html>
